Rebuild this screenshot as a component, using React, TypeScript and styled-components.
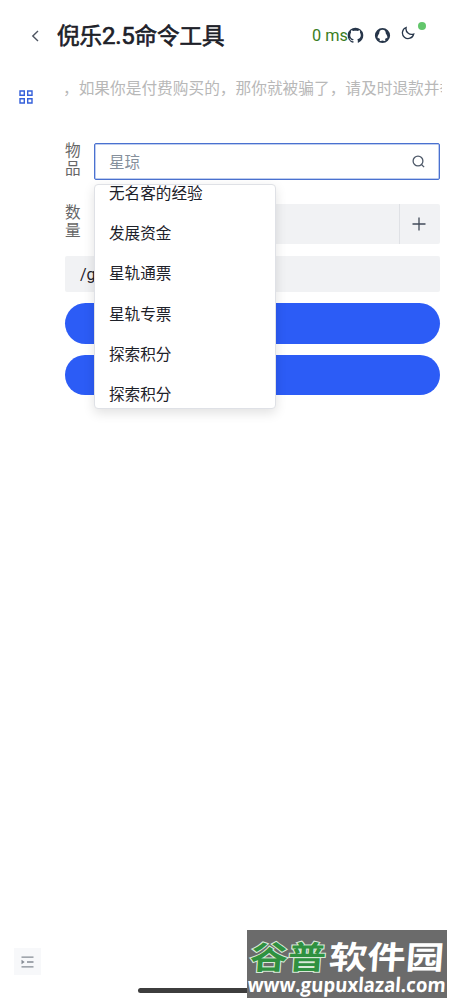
import React from "react";
import styled, { createGlobalStyle } from "styled-components";

const Global = createGlobalStyle`
  * { box-sizing: border-box; }
  body {
    margin: 0;
    background: #fff;
    color: #1d2129;
    font: 15.6px/20px "Noto Sans CJK SC", sans-serif;
    overflow: hidden;
  }
  svg { display: block; flex: none; }
`;

const Page = styled.div`
  position: relative;
  display: flex;
  flex-direction: column;
  width: 450px;
  height: 1001px;
  overflow: hidden;
`;

const Header = styled.header`
  display: flex;
  align-items: center;
  height: 71px;
  padding-left: 29px;
`;

const Title = styled.h1`
  width: 255px;
  margin: -1px 0 0 16px;
  font-size: 22.5px;
  line-height: 32px;
  font-weight: 400;
  -webkit-text-stroke: 0.65px #1d2129;
  white-space: nowrap;
`;

const Version = styled.span`
  font-family: Roboto, sans-serif;
  font-size: 24px;
  letter-spacing: -0.3px;
`;

const Ping = styled.span`
  width: 35px;
  font: 16.3px/20px Roboto, sans-serif;
  color: #3a7d1e;
  white-space: nowrap;
`;

const Tools = styled.div`
  display: flex;
  align-items: center;
  gap: 10px;
`;

const ThemeToggle = styled.div`
  position: relative;
  margin-top: -6px;
`;

const StatusDot = styled.i`
  position: absolute;
  left: 17px;
  top: -4px;
  width: 8px;
  height: 8px;
  border-radius: 50%;
  background: #62c66b;
`;

const Body = styled.div`
  display: flex;
  flex: 1;
`;

const Sidebar = styled.aside`
  display: flex;
  flex-direction: column;
  justify-content: space-between;
  width: 65px;
  padding: 19px 0 26px 14px;
`;

const MenuItem = styled.div`
  padding-left: 5px;
`;

const Collapse = styled.div`
  display: flex;
  align-items: center;
  justify-content: center;
  width: 27px;
  height: 27px;
  background: #f7f8fa;
`;

const Main = styled.main`
  display: flex;
  flex-direction: column;
  width: 375px;
`;

const Notice = styled.div`
  width: 377px;
  height: 30px;
  margin: 3px 0 39px;
  line-height: 28px;
  font-size: 15.7px;
  color: #b8b8b8;
  white-space: nowrap;
  overflow: hidden;
`;

const NoticeText = styled.span`
  margin-left: -2px;
`;

const Field = styled.div<{ $height: number; $gap: number }>`
  display: flex;
  align-items: center;
  height: ${(p) => p.$height}px;
  margin-bottom: ${(p) => p.$gap}px;
`;

const Label = styled.label`
  width: 29px;
  padding: 0 13px 8px 0;
  line-height: 18px;
  color: #666;
  word-break: break-all;
`;

const Select = styled.div`
  position: relative;
  display: flex;
  align-items: center;
  justify-content: space-between;
  width: 346px;
  height: 37px;
  padding: 0 14px;
  border: 1px solid #4a71d0;
  box-shadow: inset 0 0 0 0.5px #7f9be0;
  border-radius: 2px;
  color: #86909c;
`;

const Placeholder = styled.span`
  margin-top: -2px;
`;

const Menu = styled.div`
  position: absolute;
  z-index: 2;
  left: -1px;
  top: 40px;
  width: 182px;
  height: 225px;
  padding-left: 14px;
  border: 1px solid #dfe1e6;
  border-radius: 4px;
  background: #fff;
  box-shadow: 0 4px 12px rgba(0, 0, 0, 0.12);
  overflow: hidden;
`;

const Options = styled.div`
  margin-top: -13.5px;
`;

const Option = styled.div`
  height: 40.4px;
  line-height: 40.4px;
  color: #1d2129;
  white-space: nowrap;
`;

const NumberInput = styled.div`
  display: flex;
  justify-content: flex-end;
  width: 346px;
  height: 40px;
  border-radius: 2px;
  background: #f1f2f4;
`;

const Increment = styled.div`
  display: flex;
  align-items: center;
  justify-content: center;
  width: 41px;
  padding-right: 2px;
  border-left: 1px solid #dfe1e5;
`;

const Command = styled.div`
  height: 36px;
  margin-bottom: 11px;
  padding-left: 15px;
  border-radius: 2px;
  background: #f1f2f4;
  font: 16px/37px Roboto, sans-serif;
`;

const Action = styled.div`
  height: 40.5px;
  margin-bottom: 11.3px;
  border-radius: 21px;
  background: #2c5cf6;
`;

const HomeBar = styled.div`
  position: absolute;
  left: 138px;
  top: 988px;
  width: 173px;
  height: 5px;
  border-radius: 3px;
  background: #3d3d3d;
`;

const Watermark = styled.div`
  position: absolute;
  left: 246.5px;
  top: 930px;
  width: 200.5px;
  height: 68px;
  background: #6b6b6b;
`;

const GridIcon = () => (
  <svg width="14" height="14" viewBox="0 0 14 14" fill="none" stroke="#3560da" strokeWidth="1.4">
    <path d="M1 1h4.3v4.3H1zM8.7 1H13v4.3H8.7zM1 8.7h4.3V13H1zM8.7 8.7H13V13H8.7z" />
  </svg>
);

const GithubIcon = () => (
  <svg width="17" height="17" viewBox="0 0 17 17">
    <path
      fill="#27364a"
      d="M8.5.8a7.7 7.7 0 0 0-2.6 15c.4 0 .5-.2.5-.4v-1.3c-2.1.4-2.8-.9-2.8-.9-.4-.9-.9-1.1-.9-1.1-.5-.5.1-.5.1-.5.8.1 1.2.8 1.2.8.7 1 1.600.9 2.300.6.1-.4.2-.6.4-.8-2.100-.5-3.500-1.700-3.500-4 0-1.100.4-2 .9-2.700-.1-.3-.4-1.200.1-2.300.6 0 1.400.4 2.100.9.6-.2 1.500-.3 2.200-.3s1.600.1 2.200.3c.7-.5 1.500-.9 2.100-.9.5 1.100.2 2 .1 2.300.5.7.9 1.600.9 2.700 0 2.300-1.400 3.500-3.500 4 .3.3.5.7.5 1.300v1.900c0 .2.1.4.5.3A7.700 7.700 0 0 0 8.500.8"
    />
  </svg>
);

const QqIcon = () => (
  <svg width="17" height="17" viewBox="0 0 17 17">
    <path
      fill="#27364a"
      fillRule="evenodd"
      d="M8.5.9a7.6 7.6 0 1 1 0 15.200 7.6 7.6 0 0 1 0-15.200M8.5 2.800C6.200 2.800 5.200 4.500 5.200 6.600 4 8.200 3.200 10 3.800 11.200c.3.4.9-.1 1.200-.5.2.8.6 1.400 1.100 1.800-.8.4-.8 1.300.2 1.500.9.1 1.600-.1 2.200-.4.600.3 1.300.5 2.200.4 1-.2 1-1.100.2-1.500.5-.4.9-1 1.100-1.800.3.4.9.9 1.200.5.600-1.200-.2-3-1.400-4.600 0-2.100-1-3.800-3.300-3.800"
    />
  </svg>
);

export default function App() {
  return (
    <Page>
      <Global />
      <Header>
        <svg width="12" height="14" viewBox="0 0 12 14" fill="none" stroke="#4e5561" strokeWidth="1.4">
          <path d="M9 2 3.8 7 9 12" />
        </svg>
        <Title>倪乐<Version>2.5</Version>命令工具</Title>
        <Ping>0 ms</Ping>
        <Tools>
          <GithubIcon />
          <QqIcon />
          <ThemeToggle>
            <svg width="14" height="14" viewBox="0 0 14 14" fill="none" stroke="#27364a" strokeWidth="1.3">
              <path d="M5.1 1.5A5.7 5.7 0 1 0 12.7 8 5.7 5.7 0 0 1 5.1 1.5Z" />
            </svg>
            <StatusDot />
          </ThemeToggle>
        </Tools>
      </Header>
      <Body>
        <Sidebar>
          <MenuItem><GridIcon /></MenuItem>
          <Collapse>
            <svg width="13" height="12" viewBox="0 0 13 12" fill="none" stroke="#858b94" strokeWidth="1.3">
              <path d="M.5 1.2h12M6 6h6.5M.5 10.8h12" />
              <path d="M.5 3.8 3.7 6 .5 8.2z" fill="#858b94" stroke="none" />
            </svg>
          </Collapse>
        </Sidebar>
        <Main>
          <Notice><NoticeText>，如果你是付费购买的，那你就被骗了，请及时退款并举报</NoticeText></Notice>
          <Field $height={37} $gap={24}>
            <Label>物品</Label>
            <Select>
              <Placeholder>星琼</Placeholder>
              <svg width="13" height="13" viewBox="0 0 13 13" fill="none" stroke="#4e5969" strokeWidth="1.3">
                <circle cx="6" cy="6" r="4.9" />
                <path d="m9.5 9.5 2.6 2.6" />
              </svg>
              <Menu>
                <Options>
                  <Option>无名客的经验</Option>
                  <Option>发展资金</Option>
                  <Option>星轨通票</Option>
                  <Option>星轨专票</Option>
                  <Option>探索积分</Option>
                  <Option>探索积分</Option>
                </Options>
              </Menu>
            </Select>
          </Field>
          <Field $height={40} $gap={12}>
            <Label>数量</Label>
            <NumberInput>
              <Increment>
                <svg width="14" height="14" viewBox="0 0 14 14" stroke="#424b59" strokeWidth="1.3">
                  <path d="M7 .5v13M.5 7h13" />
                </svg>
              </Increment>
            </NumberInput>
          </Field>
          <Command>/g</Command>
          <Action />
          <Action />
        </Main>
      </Body>
      <HomeBar />
      <Watermark>
        <svg width="200.5" height="68" viewBox="0 0 200.5 68" fontWeight="700">
          <g fontFamily="Noto Sans CJK SC, sans-serif" fontSize="32" transform="skewX(-4)">
            <text x="5" y="39" textLength="76" lengthAdjust="spacingAndGlyphs" fill="#2f9140" stroke="#d8ead8" strokeWidth="2" paintOrder="stroke">谷普</text>
            <text x="84" y="39" textLength="115" lengthAdjust="spacingAndGlyphs" fill="#fff">软件园</text>
          </g>
          <text x="4.500" y="62" textLength="198" lengthAdjust="spacingAndGlyphs" fill="#fff" fontFamily="Open Sans, sans-serif" fontSize="20" transform="skewX(-4)">www.gupuxlazal.com</text>
        </svg>
      </Watermark>
    </Page>
  );
}
